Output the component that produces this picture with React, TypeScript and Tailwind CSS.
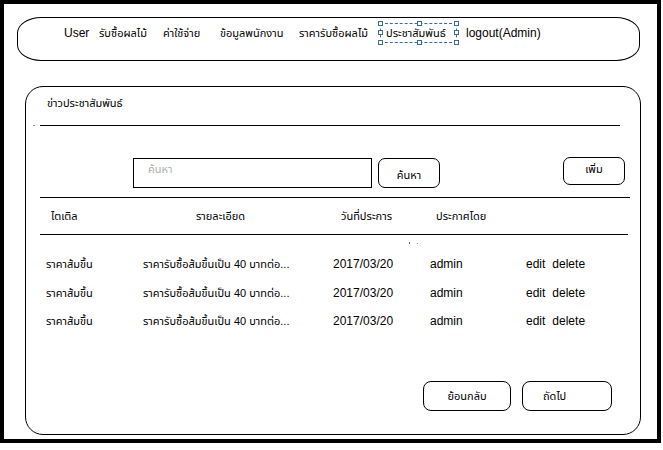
const nav = [
  { label: 'User', w: 'w-[35px] text-[12px]' },
  { label: 'รับซื้อผลไม้', w: 'w-[64px]' },
  { label: 'ค่าใช้จ่าย', w: 'w-[57px]' },
  { label: 'ข้อมูลพนักงาน', w: 'w-[79px]' },
  { label: 'ราคารับซื้อผลไม้', w: 'w-[81px]' },
]

const rows = [1, 2, 3].map(() => ({
  title: 'ราคาส้มขึ้น',
  detail: 'ราคารับซื้อส้มขึ้นเป็น 40 บาทต่อ...',
  date: '2017/03/20',
  by: 'admin',
}))

// small square handle of the selection box
function Handle({ className }: { className: string }) {
  return <span className={'absolute w-[5px] h-[5px] border border-[#3a6a9a] bg-white ' + className} />
}

export default function App() {
  return (
    <div className="w-[661px] h-[443px] border-4 border-black bg-white text-[11px] text-black font-['Liberation_Sans','Noto_Sans_Thai',sans-serif]">
      {/* top menu */}
      <div className="mt-[13px] ml-[13px] mr-[17px] h-[44px] border border-black rounded-[24px/16px] flex items-start pt-[5px] pl-[46px]">
        {nav.map((n) => (
          <span key={n.label} className={'leading-[20px] shrink-0 ' + n.w}>{n.label}</span>
        ))}
        <span className="relative w-[77px] shrink-0 px-[5px] leading-[18px] border border-dashed border-[#3a6a9a]">
          ประชาสัมพันธ์
          <Handle className="-left-[3px] -top-[3px]" />
          <Handle className="left-[36px] -top-[3px]" />
          <Handle className="-right-[3px] -top-[3px]" />
          <Handle className="-left-[3px] top-[6px]" />
          <Handle className="-right-[3px] top-[6px]" />
          <Handle className="-left-[3px] -bottom-[3px]" />
          <Handle className="left-[36px] -bottom-[3px]" />
          <Handle className="-right-[3px] -bottom-[3px]" />
        </span>
        <span className="ml-[9px] leading-[20px] text-[12px]">logout(Admin)</span>
      </div>

      {/* content card */}
      <div className="mt-[25px] ml-[21px] mr-[16px] h-[349px] border border-black rounded-[18px] flex flex-col">
        <div className="pl-[21px] pt-[8px] h-[26px]">ข่าวประชาสัมพันธ์</div>
        <div className="flex items-center mt-[12px]">
          <span className="ml-[7px] w-[2px] h-[1px] bg-[#999]" />
          <div className="ml-[5px] mr-[20px] flex-1 border-t border-black" />
        </div>

        <div className="flex items-start mt-[32px] pl-[107px] pr-[15px]">
          <div className="w-[239px] h-[30px] border border-black pl-[14px] pt-[2px] text-[#b0b0b0]">ค้นหา</div>
          <button className="ml-[6px] w-[62px] h-[30px] border border-black rounded-[7px] pt-[4px]">ค้นหา</button>
          <button className="ml-auto w-[62px] h-[28px] border border-black rounded-[7px] -mt-[1px] pb-[3px]">เพิ่ม</button>
        </div>

        <div className="ml-[14px] mr-[10px] mt-[9px] border-t border-black" />
        <div className="flex h-[36px] items-center">
          <span className="w-[170px] pl-[25px]">ไตเติล</span>
          <span className="w-[145px]">รายละเอียด</span>
          <span className="w-[95px]">วันที่ประการ</span>
          <span>ประกาศโดย</span>
        </div>
        <div className="ml-[14px] mr-[12px] border-t border-black" />
        <div className="flex gap-[7px] pl-[383px] h-[15px] pt-[7px]">
          <span className="w-[1px] h-[2px] bg-[#666]" />
          <span className="w-[1px] h-[1px] mt-[1px] bg-[#888]" />
        </div>

        <div className="flex flex-col">
          {rows.map((r, i) => (
            <div key={i} className="flex h-[28.5px] items-center">
              <span className="w-[117px] pl-[20px]">{r.title}</span>
              <span className="w-[190px]">{r.detail}</span>
              <span className="w-[97px] text-[12px]">{r.date}</span>
              <span className="w-[96px] text-[12px]">{r.by}</span>
              <span className="flex gap-[7px] text-[12px]">
                <span>edit</span>
                <span>delete</span>
              </span>
            </div>
          ))}
        </div>

        <div className="mt-auto mb-[23px] flex justify-end gap-[11px] pr-[28px]">
          <button className="w-[88px] h-[30px] border border-black rounded-[8px]">ย้อนกลับ</button>
          <button className="w-[90px] h-[30px] border border-black rounded-[8px] text-left pl-[20px]">ถัดไป</button>
        </div>
      </div>
    </div>
  )
}
